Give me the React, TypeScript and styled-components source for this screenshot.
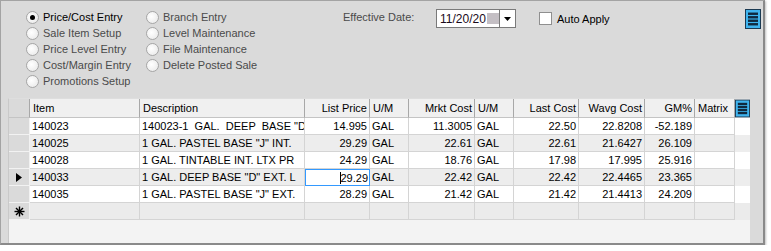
import React from 'react';
import styled, { createGlobalStyle } from 'styled-components';

const GlobalStyle = createGlobalStyle`
  html, body {
    margin: 0;
    padding: 0;
    background: #ffffff;
  }
  body {
    font-family: "Liberation Sans", Arial, sans-serif;
    font-size: 11px;
  }
`;

// column widths of the grid, row header first
const COLS = '21px 110px 165px 65px 39px 66px 39px 65px 66px 50px 40px';

interface Column {
  title: string;
  align: 'left' | 'right';
}

const columns: Column[] = [
  { title: 'Item', align: 'left' },
  { title: 'Description', align: 'left' },
  { title: 'List Price', align: 'right' },
  { title: 'U/M', align: 'left' },
  { title: 'Mrkt Cost', align: 'right' },
  { title: 'U/M', align: 'left' },
  { title: 'Last Cost', align: 'right' },
  { title: 'Wavg Cost', align: 'right' },
  { title: 'GM%', align: 'right' },
  { title: 'Matrix', align: 'left' },
];

// descriptions are what fits in the column, as the grid shows them
const rows: string[][] = [
  ['140023', '140023-1  GAL.  DEEP  BASE "D', '14.995', 'GAL', '11.3005', 'GAL', '22.50', '22.8208', '-52.189', ''],
  ['140025', '1 GAL. PASTEL BASE "J" INT.', '29.29', 'GAL', '22.61', 'GAL', '22.61', '21.6427', '26.109', ''],
  ['140028', '1 GAL. TINTABLE INT. LTX PR', '24.29', 'GAL', '18.76', 'GAL', '17.98', '17.995', '25.916', ''],
  ['140033', '1 GAL. DEEP BASE "D" EXT. L', '29.29', 'GAL', '22.42', 'GAL', '22.42', '22.4465', '23.365', ''],
  ['140035', '1 GAL. PASTEL BASE "J" EXT.', '28.29', 'GAL', '21.42', 'GAL', '21.42', '21.4413', '24.209', ''],
];

const modesLeft = ['Price/Cost Entry', 'Sale Item Setup', 'Price Level Entry', 'Cost/Margin Entry', 'Promotions Setup'];
const modesRight = ['Branch Entry', 'Level Maintenance', 'File Maintenance', 'Delete Posted Sale'];

// Styled Components
const Window = styled.div`
  width: 762px;
  height: 242px;
  background: #dadada;
  border-top: 1px solid #a3a3a3;
  border-left: 1px solid #a3a3a3;
  border-right: 2px solid #8a8a8a;
  border-bottom: 2px solid #8a8a8a;
  box-shadow: 1px 1px 2px rgba(0, 0, 0, 0.25);
  display: flex;
  flex-direction: column;
`;

const TopBar = styled.div`
  height: 97px;
  display: flex;
  align-items: flex-start;
  padding-left: 25px;
  box-sizing: border-box;
`;

const RadioColumn = styled.div<{ $width: number }>`
  width: ${(p) => p.$width}px;
  padding-top: 8px;
  display: flex;
  flex-direction: column;
`;

const RadioItem = styled.div<{ $active?: boolean }>`
  height: 16px;
  display: flex;
  align-items: center;
  color: ${(p) => (p.$active ? '#000000' : '#4a4a4a')};
  white-space: nowrap;
`;

const RadioDot = styled.span<{ $checked?: boolean }>`
  width: 11px;
  height: 11px;
  border-radius: 50%;
  border: 1px solid #a6a6a6;
  background: radial-gradient(circle at 40% 40%, #ffffff 0%, #eeeeee 70%, #dcdcdc 100%);
  margin-right: 4px;
  box-sizing: content-box;
  display: flex;
  align-items: center;
  justify-content: center;
  flex-shrink: 0;

  &::after {
    content: '';
    display: ${(p) => (p.$checked ? 'block' : 'none')};
    width: 5px;
    height: 5px;
    border-radius: 50%;
    background: #000000;
  }
`;

const DateLabel = styled.div`
  width: 93px;
  padding-top: 10px;
  color: #4a4a4a;
`;

const DateBox = styled.div`
  margin-top: 8px;
  width: 80px;
  height: 19px;
  box-sizing: border-box;
  border: 1px solid #7a7a7a;
  background: #ffffff;
  display: flex;
  align-items: center;
`;

const DateText = styled.span`
  padding-left: 3px;
  color: #1a0a1a;
  font-size: 12px;
  display: flex;
  align-items: center;
`;

const Redacted = styled.span`
  display: inline-block;
  width: 12px;
  height: 11px;
  background: #c4bfc4;
  margin-left: 1px;
`;

const DropButton = styled.div`
  margin-left: auto;
  width: 16px;
  height: 100%;
  border-left: 1px solid #7a7a7a;
  display: flex;
  align-items: center;
  justify-content: center;
`;

const CheckLabel = styled.label`
  margin-left: 23px;
  margin-top: 11px;
  display: flex;
  align-items: center;
  color: #000000;
`;

const CheckBox = styled.span`
  width: 11px;
  height: 11px;
  border: 1px solid #8f8f8f;
  background: #ffffff;
  margin-right: 5px;
`;

const MenuSlot = styled.div`
  margin-left: auto;
  margin-right: 2px;
  margin-top: 8px;
`;

const GridArea = styled.div`
  flex: 1;
  margin-left: 7px;
  margin-right: 13px;
  background: #f3f3f3;
  border-left: 1px solid #c9c9c9;
  border-top: 1px solid #dedede;
  display: flex;
  flex-direction: column;
`;

const HeaderLine = styled.div`
  display: flex;
  align-items: flex-start;
`;

const GridRow = styled.div<{ $bg: string; $height: number }>`
  display: grid;
  grid-template-columns: ${COLS};
  height: ${(p) => p.$height}px;
  background: ${(p) => p.$bg};
`;

const HeaderCell = styled.div<{ $align: 'left' | 'right' }>`
  box-sizing: border-box;
  border-right: 1px solid #a8a8a8;
  border-bottom: 1px solid #c4c4c4;
  background: #f0f0f0;
  color: #000000;
  padding: 0 2px 0 3px;
  display: flex;
  align-items: center;
  justify-content: ${(p) => (p.$align === 'right' ? 'flex-end' : 'flex-start')};
  white-space: nowrap;
  overflow: hidden;
  font-size: 11px;
`;

const RowHead = styled.div<{ $header?: boolean }>`
  box-sizing: border-box;
  background: #dadada;
  border-right: 1px solid ${(p) => (p.$header ? '#a8a8a8' : '#f2f2f2')};
  border-bottom: 1px solid ${(p) => (p.$header ? '#c4c4c4' : '#f2f2f2')};
  display: flex;
  align-items: center;
  justify-content: center;
`;

const Cell = styled.div<{ $align: 'left' | 'right'; $selected?: boolean }>`
  box-sizing: border-box;
  border-right: 1px solid #d4d4d4;
  border-bottom: 1px solid #d4d4d4;
  padding: ${(p) => (p.$align === 'right' ? '0 2px 0 3px' : '0 0 0 2px')};
  display: flex;
  align-items: center;
  justify-content: ${(p) => (p.$align === 'right' ? 'flex-end' : 'flex-start')};
  white-space: pre;
  overflow: hidden;
  color: #000000;
  font-size: 11px;
  ${(p) =>
    p.$selected &&
    `
    border: 1px solid #3399ff;
    background: #ffffff;
    padding-right: 1px;
  `}
`;

const Caret = styled.span`
  border-left: 1px solid #000000;
  height: 12px;
  margin-right: -1px;
`;

const MenuIcon: React.FC<{ height: number }> = ({ height }) => (
  <svg width="16" height={height} viewBox={`0 0 16 ${height}`}>
    <rect x="0.5" y="0.5" width="15" height={height - 1} fill="#3fb4ef" stroke="#1b3a52" />
    {[0, 1, 2, 3].map((i) => {
      const step = (height - 6) / 4;
      return <rect key={i} x="3" y={3 + i * step + step / 2 - 1.2} width="10" height="2.4" fill="#102a40" />;
    })}
  </svg>
);

const App: React.FC = () => {
  return (
    <>
      <GlobalStyle />
      <Window>
        <TopBar>
          <RadioColumn $width={120}>
            {modesLeft.map((m, i) => (
              <RadioItem key={m} $active={i === 0}>
                <RadioDot $checked={i === 0} />
                {m}
              </RadioItem>
            ))}
          </RadioColumn>
          <RadioColumn $width={197}>
            {modesRight.map((m) => (
              <RadioItem key={m}>
                <RadioDot />
                {m}
              </RadioItem>
            ))}
          </RadioColumn>
          <DateLabel>Effective Date:</DateLabel>
          <DateBox>
            <DateText>
              11/20/20
              <Redacted />
            </DateText>
            <DropButton>
              <svg width="7" height="4" viewBox="0 0 7 4">
                <polygon points="0,0 7,0 3.5,4" fill="#000000" />
              </svg>
            </DropButton>
          </DateBox>
          <CheckLabel>
            <CheckBox />
            Auto Apply
          </CheckLabel>
          <MenuSlot>
            <MenuIcon height={20} />
          </MenuSlot>
        </TopBar>

        <GridArea>
          {/* Header Row */}
          <HeaderLine>
            <GridRow $bg="#f0f0f0" $height={19}>
              <RowHead $header />
              {columns.map((c, i) => (
                <HeaderCell key={i} $align={c.align}>
                  {c.title}
                </HeaderCell>
              ))}
            </GridRow>
            <MenuIcon height={19} />
          </HeaderLine>

          {/* Data Rows */}
          {rows.map((r, ri) => (
            <GridRow key={r[0]} $bg={ri % 2 === 1 ? '#ededed' : '#ffffff'} $height={17}>
              <RowHead>
                {ri === 3 && (
                  <svg width="6" height="9" viewBox="0 0 6 9">
                    <polygon points="0,0 6,4.5 0,9" fill="#000000" />
                  </svg>
                )}
              </RowHead>
              {r.map((v, ci) => {
                const selected = ri === 3 && ci === 2;
                return (
                  <Cell key={ci} $align={columns[ci].align} $selected={selected}>
                    {selected && <Caret />}
                    {v}
                  </Cell>
                );
              })}
            </GridRow>
          ))}

          {/* New Row */}
          <GridRow $bg="#ebebeb" $height={17}>
            <RowHead>
              <svg width="11" height="11" viewBox="0 0 11 11">
                <g stroke="#000000" strokeWidth="1.4">
                  <line x1="5.5" y1="0.5" x2="5.5" y2="10.5" />
                  <line x1="0.5" y1="5.5" x2="10.5" y2="5.5" />
                  <line x1="2" y1="2" x2="9" y2="9" />
                  <line x1="9" y1="2" x2="2" y2="9" />
                </g>
              </svg>
            </RowHead>
            {columns.map((c, ci) => (
              <Cell key={ci} $align={c.align} />
            ))}
          </GridRow>
        </GridArea>
      </Window>
    </>
  );
};

export default App;
